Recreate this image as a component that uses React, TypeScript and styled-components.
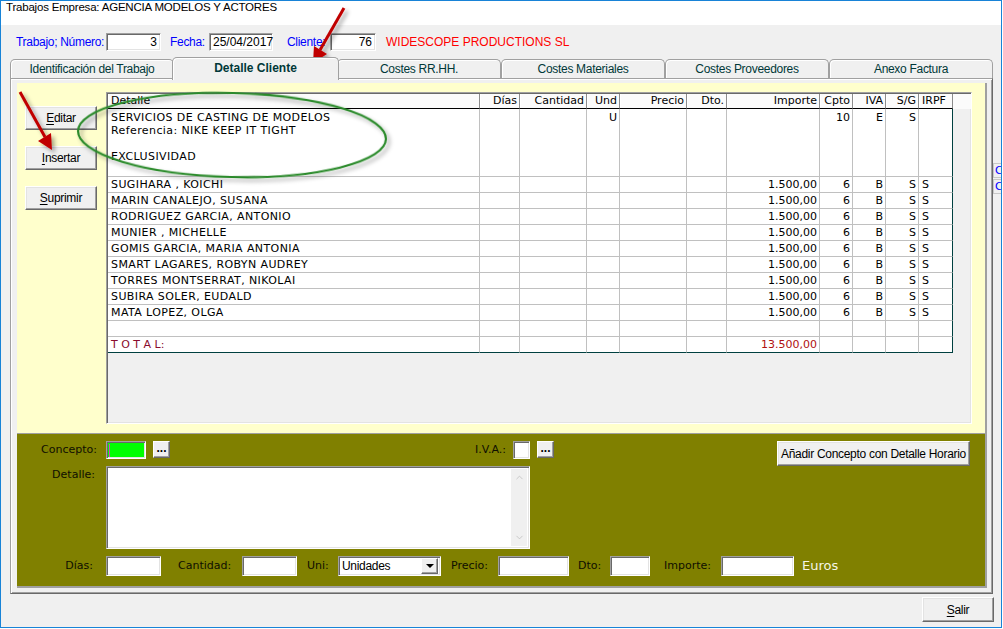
import React from 'react'
import styled, { createGlobalStyle } from 'styled-components'
import { ChevronUp, ChevronDown } from 'lucide-react'

const UI = `'Liberation Sans', Arial, sans-serif`
const VERDANA = `'DejaVu Sans', Verdana, sans-serif`

const GlobalStyle = createGlobalStyle`
  html, body { margin: 0; padding: 0; background: #fff; }
  body { font-family: ${UI}; }
`

type Align = 'left' | 'right'

const columns: { title: string; width: number; align: Align }[] = [
  { title: 'Detalle', width: 372, align: 'left' },
  { title: 'Días', width: 40, align: 'right' },
  { title: 'Cantidad', width: 67, align: 'right' },
  { title: 'Und', width: 33, align: 'right' },
  { title: 'Precio', width: 67, align: 'right' },
  { title: 'Dto.', width: 40, align: 'right' },
  { title: 'Importe', width: 93, align: 'right' },
  { title: 'Cpto', width: 33, align: 'right' },
  { title: 'IVA', width: 33, align: 'right' },
  { title: 'S/G', width: 33, align: 'right' },
  { title: 'IRPF', width: 34, align: 'left' },
]
const gridCols = columns.map((c) => `${c.width}px`).join(' ')

const people = [
  'SUGIHARA , KOICHI',
  'MARIN CANALEJO, SUSANA',
  'RODRIGUEZ GARCIA, ANTONIO',
  'MUNIER , MICHELLE',
  'GOMIS GARCIA, MARIA ANTONIA',
  'SMART LAGARES, ROBYN AUDREY',
  'TORRES MONTSERRAT, NIKOLAI',
  'SUBIRA SOLER, EUDALD',
  'MATA LOPEZ, OLGA',
]

const tabs = [
  'Identificación del Trabajo',
  'Detalle Cliente',
  'Costes RR.HH.',
  'Costes Materiales',
  'Costes Proveedores',
  'Anexo Factura',
]

export default function App() {
  return (
    <>
      <GlobalStyle />
      <Window>
        <TitleBar>Trabajos Empresa: AGENCIA MODELOS Y ACTORES</TitleBar>
        <Body>
          <HeaderRow>
            <HeadLabel $w={90}>Trabajo; Número:</HeadLabel>
            <Field $w={55} $align="right">3</Field>
            <HeadLabel $w={48} $pl={9}>Fecha:</HeadLabel>
            <Field $w={64}>25/04/2017</Field>
            <HeadLabel $w={57} $pl={14}>Cliente:</HeadLabel>
            <Field $w={46} $align="right">76</Field>
            <ClientName>WIDESCOPE PRODUCTIONS SL</ClientName>
          </HeaderRow>

          <Middle>
            <TabArea>
              <TabStrip>
                {tabs.map((t, i) => (
                  <Tab key={t} $active={i === 1}>
                    {t}
                  </Tab>
                ))}
              </TabStrip>
              <TabPanel>
                <Page>
                  <YellowPane>
                    <SideButtons>
                      <ClassicButton $w={72} $h={24}>
                        <u>E</u>ditar
                      </ClassicButton>
                      <ClassicButton $w={72} $h={24}>
                        <u>I</u>nsertar
                      </ClassicButton>
                      <ClassicButton $w={72} $h={24}>
                        <u>S</u>uprimir
                      </ClassicButton>
                    </SideButtons>

                    <ListView>
                      <HeaderGrid>
                        {columns.map((c) => (
                          <HeadCell key={c.title} $align={c.align}>
                            {c.title}
                          </HeadCell>
                        ))}
                        <HeadFiller />
                      </HeaderGrid>

                      <GridRow>
                        <Cell $align="left" $tall $spaced>
                          <Line>SERVICIOS DE CASTING DE MODELOS</Line>
                          <Line>Referencia: NIKE KEEP IT TIGHT</Line>
                          <Line>&nbsp;</Line>
                          <Line>EXCLUSIVIDAD</Line>
                        </Cell>
                        {['', '', 'U', '', '', '', '10', 'E', 'S', ''].map((v, i) => (
                          <Cell key={i} $align={columns[i + 1].align} $tall $last={i === 9}>
                            <Line>{v}</Line>
                          </Cell>
                        ))}
                      </GridRow>

                      {people.map((p) => (
                        <GridRow key={p}>
                          {[p, '', '', '', '', '', '1.500,00', '6', 'B', 'S', 'S'].map((v, i) => (
                            <Cell key={i} $align={columns[i].align} $last={i === 10} $spaced={i === 0}>
                              {v}
                            </Cell>
                          ))}
                        </GridRow>
                      ))}

                      <GridRow>
                        {columns.map((c, i) => (
                          <Cell key={i} $align={c.align} $last={i === 10} />
                        ))}
                      </GridRow>

                      <GridRow>
                        {['T O T A L:', '', '', '', '', '', '13.500,00', '', '', '', ''].map((v, i) => (
                          <Cell
                            key={i}
                            $align={columns[i].align}
                            $last={i === 10}
                            $bottom
                            $color={i === 0 ? '#8a0b2e' : '#b01010'}
                          >
                            {v}
                          </Cell>
                        ))}
                      </GridRow>
                    </ListView>
                  </YellowPane>

                  <OlivePane>
                    <OliveRow $h={25}>
                      <OLabel $w={89} $align="right" $pr={9}>
                        Concepto:
                      </OLabel>
                      <Input $w={40} $h={18} $bg="#00ff00">
                        <Caret />
                      </Input>
                      <DotsButton $ml={7}>...</DotsButton>
                      <OLabel $w={343} $align="right" $pr={7}>
                        I.V.A.:
                      </OLabel>
                      <Input $w={17} $h={18} />
                      <DotsButton $ml={7}>...</DotsButton>
                      <Spacer />
                      <ClassicButton $w={193} $h={25}>
                        Añadir Concepto con Detalle Horario
                      </ClassicButton>
                    </OliveRow>

                    <OliveRow $h={83}>
                      <OLabel $w={89} $align="right" $pr={11}>
                        Detalle:
                      </OLabel>
                      <TextArea>
                        <TextBody />
                        <ScrollTrack>
                          <ChevronUp size={11} strokeWidth={1.5} color="#b8b8b8" />
                          <ChevronDown size={11} strokeWidth={1.5} color="#b8b8b8" />
                        </ScrollTrack>
                      </TextArea>
                    </OliveRow>

                    <OliveRow $h={20} $mt={7}>
                      <OLabel $w={89} $align="right" $pr={13} $lh={20}>
                        Días:
                      </OLabel>
                      <Input $w={55} $h={20} />
                      <OLabel $w={81} $pl={17} $lh={20}>
                        Cantidad:
                      </OLabel>
                      <Input $w={55} $h={20} />
                      <OLabel $w={41} $pl={10} $lh={20}>
                        Uni:
                      </OLabel>
                      <SelectBox>
                        <SelectText>Unidades</SelectText>
                        <DropButton>
                          <Triangle />
                        </DropButton>
                      </SelectBox>
                      <OLabel $w={57} $pl={10} $lh={20}>
                        Precio:
                      </OLabel>
                      <Input $w={71} $h={20} />
                      <OLabel $w={41} $pl={9} $lh={20}>
                        Dto:
                      </OLabel>
                      <Input $w={40} $h={20} />
                      <OLabel $w={71} $pl={14} $lh={20}>
                        Importe:
                      </OLabel>
                      <Input $w={73} $h={20} />
                      <Euros>Euros</Euros>
                    </OliveRow>
                  </OlivePane>
                </Page>
              </TabPanel>
            </TabArea>

            <SideStub>
              <SideLink>Co</SideLink>
              <SideLink>Co</SideLink>
            </SideStub>
          </Middle>

          <Footer>
            <ClassicButton $w={72} $h={25}>
              <u>S</u>alir
            </ClassicButton>
          </Footer>
        </Body>

        <Overlay width="1003" height="629" viewBox="0 0 1003 629">
          <defs>
            <filter id="shade" x="-20%" y="-20%" width="140%" height="140%">
              <feDropShadow dx="3" dy="3" stdDeviation="2" floodColor="#000" floodOpacity="0.35" />
            </filter>
          </defs>
          <ellipse
            cx="232"
            cy="135"
            rx="154"
            ry="42"
            fill="none"
            stroke="#2a8a2a"
            strokeWidth="2.2"
            transform="rotate(1.5 232 135)"
            filter="url(#shade)"
          />
          <g filter="url(#shade)">
            <line x1="344" y1="8" x2="320" y2="50" stroke="#c00000" strokeWidth="3" />
            <polygon points="313,63 327,54 314,46" fill="#c00000" />
            <line x1="20" y1="92" x2="45" y2="137" stroke="#c00000" strokeWidth="3" />
            <polygon points="52,150 51,133 38,141" fill="#c00000" />
          </g>
        </Overlay>
      </Window>
    </>
  )
}

const Window = styled.div`
  position: relative;
  box-sizing: border-box;
  width: 1002px;
  height: 628px;
  border: 1px solid #1883d7;
  background: #f0f0f0;
  display: flex;
  flex-direction: column;
  overflow: hidden;
`

const TitleBar = styled.div`
  height: 24px;
  line-height: 24px;
  padding-left: 5px;
  background: #fff;
  font: 11.5px ${UI};
  letter-spacing: -0.2px;
  color: #000;
`

const Body = styled.div`
  flex: 1;
  display: flex;
  flex-direction: column;
`

const HeaderRow = styled.div`
  display: flex;
  align-items: center;
  height: 18px;
  margin-top: 8px;
  padding-left: 15px;
`

const HeadLabel = styled.span<{ $w: number; $pl?: number }>`
  box-sizing: border-box;
  flex: none;
  width: ${(p) => p.$w}px;
  padding-left: ${(p) => p.$pl ?? 0}px;
  font: 12px ${UI};
  letter-spacing: -0.3px;
  color: #0000ff;
  white-space: nowrap;
`

const sunken = `
  box-sizing: border-box;
  border: 1px solid;
  border-color: #a0a0a0 #ffffff #ffffff #a0a0a0;
  box-shadow: inset 1px 1px 0 #696969, inset -1px -1px 0 #e3e3e3;
`

const Field = styled.div<{ $w: number; $align?: Align }>`
  ${sunken}
  flex: none;
  width: ${(p) => p.$w}px;
  height: 18px;
  background: #fff;
  padding: 0 3px;
  text-align: ${(p) => p.$align ?? 'left'};
  font: 12px ${UI};
  line-height: 17px;
  color: #000;
`

const ClientName = styled.span`
  margin-left: 10px;
  font: 12px ${UI};
  color: #ff0000;
  white-space: nowrap;
`

const Middle = styled.div`
  display: flex;
  margin-top: 6px;
  margin-left: 9px;
`

const TabArea = styled.div`
  flex: none;
  width: 983px;
  display: flex;
  flex-direction: column;
`

const TabStrip = styled.div`
  display: flex;
  align-items: flex-end;
  height: 21px;
`

const Tab = styled.div<{ $active?: boolean }>`
  position: relative;
  z-index: ${(p) => (p.$active ? 2 : 1)};
  box-sizing: border-box;
  flex: none;
  width: ${(p) => (p.$active ? 167 : 164)}px;
  height: ${(p) => (p.$active ? 23 : 19)}px;
  margin: 0 ${(p) => (p.$active ? -2 : 0)}px ${(p) => (p.$active ? -2 : 0)}px;
  border: 1px solid #a0a0a0;
  border-bottom: none;
  border-radius: 5px 5px 0 0;
  background: #f0f0f0;
  box-shadow: inset 1px 1px 0 #ffffff;
  display: flex;
  align-items: center;
  justify-content: center;
  padding-bottom: ${(p) => (p.$active ? 2 : 0)}px;
  font: ${(p) => (p.$active ? 'bold 12px' : '12px')} ${UI};
  letter-spacing: ${(p) => (p.$active ? 0 : -0.3)}px;
  color: #003838;
  white-space: nowrap;
`

const TabPanel = styled.div`
  position: relative;
  z-index: 0;
  box-sizing: border-box;
  height: 516px;
  border: 1px solid;
  border-color: #a0a0a0 #696969 #696969 #a0a0a0;
  box-shadow: inset 1px 1px 0 #ffffff, inset -1px -1px 0 #a0a0a0;
  background: #f0f0f0;
  padding: 4px 5px 5px 6px;
`

const Page = styled.div`
  box-sizing: border-box;
  height: 505px;
  border-right: 2px solid #a0a0a0;
  border-bottom: 2px solid #a0a0a0;
  display: flex;
  flex-direction: column;
`

const YellowPane = styled.div`
  height: 350px;
  display: flex;
  background: #ffffcc;
  border-bottom: 1px solid #a0a0a0;
`

const SideButtons = styled.div`
  box-sizing: border-box;
  width: 89px;
  padding: 23px 0 0 8px;
  display: flex;
  flex-direction: column;
  gap: 16px;
`

const ClassicButton = styled.button<{ $w: number; $h: number }>`
  box-sizing: border-box;
  flex: none;
  width: ${(p) => p.$w}px;
  height: ${(p) => p.$h}px;
  padding: 0;
  background: #f0f0f0;
  border: 1px solid;
  border-color: #ffffff #696969 #696969 #ffffff;
  box-shadow: inset -1px -1px 0 #a0a0a0, inset 1px 1px 0 #e3e3e3;
  font: 12px ${UI};
  letter-spacing: -0.3px;
  color: #000;
  white-space: nowrap;

  u {
    text-decoration-thickness: 1px;
    text-underline-offset: 2px;
  }
`

const ListView = styled.div`
  ${sunken}
  width: 866px;
  height: 332px;
  margin-top: 9px;
  padding: 1px 0 0 1px;
  background: #f0f0f0;
  overflow: hidden;
  font: 11px ${VERDANA};
  color: #000;
`

const HeaderGrid = styled.div`
  display: grid;
  grid-template-columns: ${gridCols} 1fr;
  height: 15px;
`

const HeadCell = styled.div<{ $align: Align }>`
  box-sizing: border-box;
  background: #fbfbfb;
  border-right: 1px solid #8c8c8c;
  border-bottom: 1px solid #000;
  box-shadow: inset 1px 0 0 #ffffff;
  text-align: ${(p) => p.$align};
  padding: 0 ${(p) => (p.$align === 'right' ? 2 : 0)}px 0 ${(p) => (p.$align === 'left' ? 3 : 0)}px;
  line-height: 14px;
  white-space: nowrap;
  overflow: hidden;
`

const HeadFiller = styled.div`
  background: #fbfbfb;
`

const GridRow = styled.div`
  display: grid;
  grid-template-columns: ${gridCols};
  width: 845px;
  background: #fff;
`

const Cell = styled.div<{
  $align: Align
  $tall?: boolean
  $last?: boolean
  $bottom?: boolean
  $spaced?: boolean
  $color?: string
}>`
  height: ${(p) => (p.$tall ? 65 : 15)}px;
  border-right: 1px solid ${(p) => (p.$last ? '#004040' : '#c0c0c0')};
  border-bottom: 1px solid ${(p) => (p.$bottom ? '#004040' : '#c0c0c0')};
  text-align: ${(p) => p.$align};
  padding: ${(p) => (p.$tall ? 2 : 0)}px ${(p) => (p.$align === 'right' ? 2 : 0)}px 0
    ${(p) => (p.$align === 'left' ? 3 : 0)}px;
  line-height: 15px;
  letter-spacing: ${(p) => (p.$spaced ? 0.4 : 0)}px;
  color: ${(p) => p.$color ?? '#000'};
  white-space: nowrap;
  overflow: hidden;
`

const Line = styled.div`
  height: 13px;
  line-height: 13px;
`

const OlivePane = styled.div`
  flex: 1;
  background: #808000;
  padding-top: 7px;
  display: flex;
  flex-direction: column;
`

const OliveRow = styled.div<{ $h: number; $mt?: number }>`
  display: flex;
  align-items: flex-start;
  height: ${(p) => p.$h}px;
  margin-top: ${(p) => p.$mt ?? 0}px;
  padding-right: 15px;
`

const OLabel = styled.span<{ $w: number; $align?: Align; $pl?: number; $pr?: number; $lh?: number }>`
  box-sizing: border-box;
  flex: none;
  width: ${(p) => p.$w}px;
  padding-left: ${(p) => p.$pl ?? 0}px;
  padding-right: ${(p) => p.$pr ?? 0}px;
  text-align: ${(p) => p.$align ?? 'left'};
  font: 11px ${VERDANA};
  line-height: ${(p) => p.$lh ?? 17}px;
  color: #0f0f00;
  white-space: nowrap;
`

const Input = styled.div<{ $w: number; $h: number; $bg?: string }>`
  ${sunken}
  flex: none;
  width: ${(p) => p.$w}px;
  height: ${(p) => p.$h}px;
  background: ${(p) => p.$bg ?? '#fff'};
  display: flex;
  align-items: center;
  padding-left: 2px;
`

const Caret = styled.span`
  width: 1px;
  height: 13px;
  background: #e040c0;
`

const DotsButton = styled.button<{ $ml: number }>`
  box-sizing: border-box;
  flex: none;
  width: 17px;
  height: 17px;
  margin-left: ${(p) => p.$ml}px;
  padding: 0 0 4px;
  background: #f0f0f0;
  border: 1px solid;
  border-color: #ffffff #696969 #696969 #ffffff;
  box-shadow: inset -1px -1px 0 #a0a0a0;
  font: bold 12px ${UI};
  line-height: 10px;
  color: #000;
  display: flex;
  align-items: flex-end;
  justify-content: center;
`

const Spacer = styled.div`
  flex: 1;
`

const TextArea = styled.div`
  ${sunken}
  width: 424px;
  height: 83px;
  background: #fff;
  display: flex;
  padding: 2px;
`

const TextBody = styled.div`
  flex: 1;
`

const ScrollTrack = styled.div`
  width: 16px;
  background: #f0f0f0;
  display: flex;
  flex-direction: column;
  justify-content: space-between;
  align-items: center;
  padding: 3px 0;
`

const SelectBox = styled.div`
  ${sunken}
  flex: none;
  width: 103px;
  height: 20px;
  background: #fff;
  display: flex;
  align-items: center;
  padding: 2px 2px 2px 3px;
`

const SelectText = styled.span`
  flex: 1;
  font: 12px ${UI};
  letter-spacing: -0.3px;
  color: #000;
`

const DropButton = styled.div`
  box-sizing: border-box;
  width: 17px;
  height: 16px;
  background: #f0f0f0;
  border: 1px solid;
  border-color: #ffffff #696969 #696969 #ffffff;
  box-shadow: inset -1px -1px 0 #a0a0a0;
  display: flex;
  align-items: center;
  justify-content: center;
`

const Triangle = styled.span`
  width: 0;
  height: 0;
  border-left: 4px solid transparent;
  border-right: 4px solid transparent;
  border-top: 4px solid #000;
`

const Euros = styled.span`
  margin-left: 8px;
  font: 13px ${VERDANA};
  line-height: 20px;
  color: #f6f6e6;
`

const SideStub = styled.div`
  flex: 1;
  min-width: 0;
  overflow: hidden;
  padding-top: 106px;
  display: flex;
  flex-direction: column;
  gap: 1px;
`

const SideLink = styled.div`
  box-sizing: border-box;
  height: 15px;
  border: 1px solid #c8c8c8;
  border-right: none;
  padding-left: 1px;
  font: 11px ${VERDANA};
  line-height: 13px;
  color: #0000ff;
  white-space: nowrap;
  overflow: hidden;
`

const Footer = styled.div`
  display: flex;
  justify-content: flex-end;
  padding: 3px 7px 0 0;
`

const Overlay = styled.svg`
  position: absolute;
  top: -1px;
  left: -1px;
  pointer-events: none;
`
